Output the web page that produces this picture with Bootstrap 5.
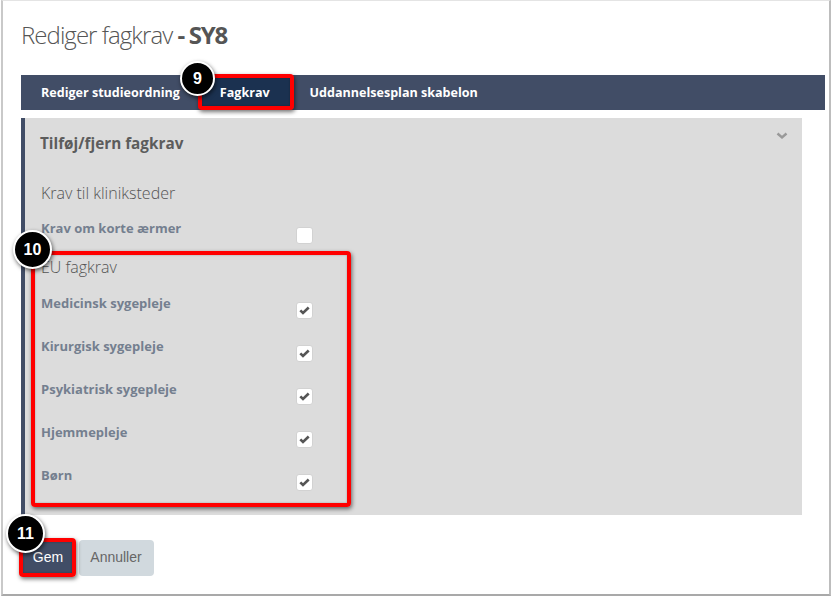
<!DOCTYPE html>
<html lang="da">
<head>
<meta charset="utf-8">
<title>Rediger fagkrav</title>
<link href="https://cdn.jsdelivr.net/npm/bootstrap@5.3.0/dist/css/bootstrap.min.css" rel="stylesheet">
<style>
html,body{height:100%;background:#fff;overflow:hidden}
body{font-family:"Open Sans","Liberation Sans",sans-serif;position:relative}
.shot-frame{position:absolute;left:1px;top:0;width:830px;height:596px;border:1px solid #c9c9c9;border-top-color:#e4e4e4;border-left-width:2px;border-right-color:#bdbdbd;border-right-width:2px;border-bottom-color:#a9a9a9;border-bottom-width:2px;pointer-events:none}
.page-wrap{padding:19px 7px 0 21px}
.page-title{font-size:24px;font-weight:300;color:#555;margin:0;line-height:32px;letter-spacing:-.95px}
.page-title b{font-weight:700;letter-spacing:-1.3px}
.tab-bar{background:#414d66;height:35px;margin-top:24px}
.tab-link{display:block;color:#fff;font-size:12.55px;font-weight:700;line-height:35px;padding:0 20px;text-decoration:none;height:35px}
.tab-link.is-on{background:#1b3150}
.req-panel{background:#dcdcdc;border-left:4px solid #414d66;width:781px;height:397px;margin-top:8px;padding:0 15px 0 16px;position:relative}
.req-head{font-size:15.3px;font-weight:700;color:#5c5c5c;line-height:22px;padding-top:14px;margin-left:-1px}
.req-chev{position:absolute;right:14px;top:14px;width:12px;height:8px}
.req-sec{font-size:16px;font-weight:300;color:#555;line-height:22px}
.sec-one{margin-top:28px}
.sec-two{margin-top:-6px}
.req-row{height:43px;display:flex}
.req-row label{width:255px;font-size:13px;font-weight:700;color:#747f8f;line-height:18px}
.tick{width:17px;height:17px;background:#fff;border:1px solid #d2d2d2;border-radius:3px;margin-top:8px;display:flex;align-items:center;justify-content:center}
.row-list-a{margin-top:15px}
.row-list-b{margin-top:16px}
.act-row{margin-top:25px;gap:4px}
.act-gem{background:#414d66;color:#fff;border:0;border-radius:4px;font-family:"Liberation Sans",sans-serif;font-size:14px;width:54px;height:36px;padding:0 0 1px}
.act-cancel{background:#d1d9de;color:#666;border:0;border-radius:4px;font-family:"Liberation Sans",sans-serif;font-size:14px;width:75px;height:36px;padding:0 1px 1px 0}
.mark-box{position:absolute;border:4px solid #f00;border-radius:4px;box-shadow:1px 2px 4px rgba(0,0,0,.55),inset 0 0 2px rgba(0,0,0,.3);pointer-events:none}
.mark-num{position:absolute;border-radius:50%;background:#000;color:#fff;border:2px solid #fff;font-family:"Liberation Sans",sans-serif;font-weight:700;font-size:16px;display:flex;align-items:center;justify-content:center;box-shadow:1px 2px 4px rgba(0,0,0,.6)}
</style>
</head>
<body>
<div class="page-wrap">
  <h1 class="page-title">Rediger fagkrav <b>- SY8</b></h1>
  <nav class="tab-bar d-flex">
    <a class="tab-link" href="#">Rediger studieordning</a>
    <a class="tab-link is-on" href="#">Fagkrav</a>
    <a class="tab-link" href="#">Uddannelsesplan skabelon</a>
  </nav>
  <section class="req-panel">
    <div class="req-head">Tilføj/fjern fagkrav</div>
    <svg class="req-chev" viewBox="0 0 12 8"><path d="M1.500 1.500 6 5.500l4.500-4" fill="none" stroke="#999" stroke-width="2.400"/></svg>
    <div class="req-sec sec-one">Krav til kliniksteder</div>
    <div class="row-list-a">
      <div class="req-row"><label>Krav om korte ærmer</label><span class="tick"></span></div>
    </div>
    <div class="req-sec sec-two">EU fagkrav</div>
    <div class="row-list-b">
      <div class="req-row"><label>Medicinsk sygepleje</label><span class="tick"><svg width="11" height="9" viewBox="0 0 11 9"><path d="M1.300 4.300 4 7l5.700-5.500" fill="none" stroke="#555" stroke-width="2.600"/></svg></span></div>
      <div class="req-row"><label>Kirurgisk sygepleje</label><span class="tick"><svg width="11" height="9" viewBox="0 0 11 9"><path d="M1.300 4.300 4 7l5.700-5.500" fill="none" stroke="#555" stroke-width="2.600"/></svg></span></div>
      <div class="req-row"><label>Psykiatrisk sygepleje</label><span class="tick"><svg width="11" height="9" viewBox="0 0 11 9"><path d="M1.300 4.300 4 7l5.700-5.500" fill="none" stroke="#555" stroke-width="2.600"/></svg></span></div>
      <div class="req-row"><label>Hjemmepleje</label><span class="tick"><svg width="11" height="9" viewBox="0 0 11 9"><path d="M1.300 4.300 4 7l5.700-5.500" fill="none" stroke="#555" stroke-width="2.600"/></svg></span></div>
      <div class="req-row"><label>Børn</label><span class="tick"><svg width="11" height="9" viewBox="0 0 11 9"><path d="M1.300 4.300 4 7l5.700-5.500" fill="none" stroke="#555" stroke-width="2.600"/></svg></span></div>
    </div>
  </section>
  <div class="act-row d-flex">
    <button class="act-gem btn" type="button">Gem</button>
    <button class="act-cancel btn" type="button">Annuller</button>
  </div>
</div>
<div class="shot-frame"></div>
<div class="mark-box" style="left:198px;top:74px;width:96px;height:36px"></div>
<div class="mark-box" style="left:31px;top:251px;width:320px;height:256px"></div>
<div class="mark-box" style="left:19px;top:538px;width:57px;height:39px"></div>
<div class="mark-num" style="left:180px;top:61px;width:35px;height:35px">9</div>
<div class="mark-num" style="left:13px;top:230px;width:39px;height:39px">10</div>
<div class="mark-num" style="left:6px;top:514px;width:39px;height:39px">11</div>
</body>
</html>
